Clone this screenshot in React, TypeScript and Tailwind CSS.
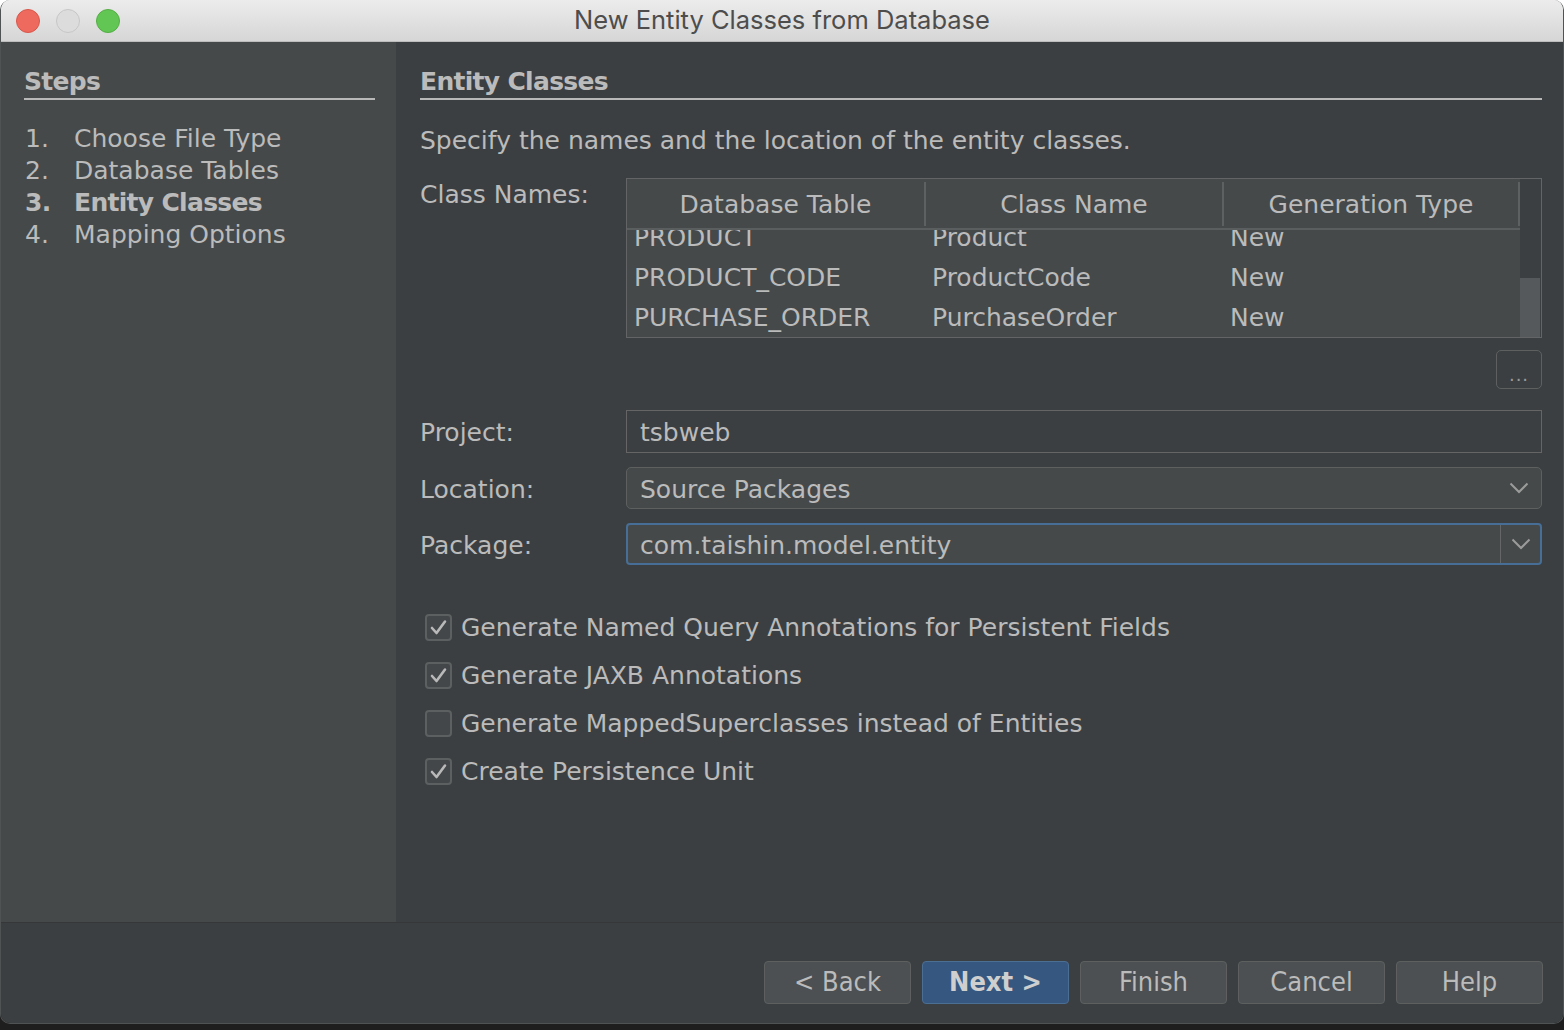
const steps = [
  { n: "1.", label: "Choose File Type" },
  { n: "2.", label: "Database Tables" },
  { n: "3.", label: "Entity Classes", current: true },
  { n: "4.", label: "Mapping Options" },
];

const rows = [
  ["PRODUCT", "Product", "New"],
  ["PRODUCT_CODE", "ProductCode", "New"],
  ["PURCHASE_ORDER", "PurchaseOrder", "New"],
];

const options = [
  { label: "Generate Named Query Annotations for Persistent Fields", checked: true },
  { label: "Generate JAXB Annotations", checked: true },
  { label: "Generate MappedSuperclasses instead of Entities", checked: false },
  { label: "Create Persistence Unit", checked: true },
];

function Chevron() {
  return (
    <svg width="20" height="12" viewBox="0 0 20 12" className="shrink-0">
      <path d="M1.5 1.5 L10 10 L18.5 1.5" fill="none" stroke="#9b9b9b" strokeWidth="2" />
    </svg>
  );
}

function CheckBox({ checked }: { checked: boolean }) {
  return (
    <span className="flex h-[27px] w-[27px] shrink-0 items-center justify-center rounded-[4px] border-2 border-[#5d6061] bg-[#43474a]">
      {checked && (
        <svg width="19" height="19" viewBox="0 0 19 19">
          <path d="M3 10 L7.5 15 L16 3.5" fill="none" stroke="#b9b9b9" strokeWidth="2.6" strokeLinecap="round" strokeLinejoin="round" />
        </svg>
      )}
    </span>
  );
}

function FooterButton({ label, primary }: { label: string; primary?: boolean }) {
  return (
    <button
      type="button"
      className={
        primary
          ? "h-[43px] w-[147px] rounded-[4px] border border-[#4b6e93] bg-[#365880] font-['DejaVu_Sans_Condensed','Liberation_Sans_Narrow','DejaVu_Sans',sans-serif] text-[27px] font-bold text-[#cfcfcf]"
          : "h-[43px] w-[147px] rounded-[4px] border border-[#5e6060] bg-[#4c5052] font-['DejaVu_Sans_Condensed','Liberation_Sans_Narrow','DejaVu_Sans',sans-serif] text-[27px] text-[#bbbbbb]"
      }
    >
      {label}
    </button>
  );
}

export default function App() {
  return (
    <div className="flex h-[1030px] w-[1564px] flex-col bg-[linear-gradient(#ffffff_50%,#1e1e1e_50%)] font-['DejaVu_Sans',sans-serif] text-[25px] text-[#bbbbbb]">
      <div className="flex h-[1024px] flex-col overflow-hidden rounded-[10px] border-x border-b border-[#505354]">
        {/* title bar */}
        <div className="grid h-[42px] shrink-0 grid-cols-[1fr_auto_1fr] items-center border-b border-[#bdbdbd] bg-[linear-gradient(#ececec,#d6d6d6)] px-[15px]">
          <div className="flex gap-4">
            <span className="h-[24px] w-[24px] rounded-full border border-[#d8574b] bg-[#ee6a5f]" />
            <span className="h-[24px] w-[24px] rounded-full border border-[#c6c6c6] bg-[#dcdcdc]" />
            <span className="h-[24px] w-[24px] rounded-full border border-[#55ad45] bg-[#62c655]" />
          </div>
          <div className="font-['Inter',sans-serif] text-[25.5px] text-[#4d4d4d]">New Entity Classes from Database</div>
          <div />
        </div>

        <div className="flex flex-1">
          {/* steps */}
          <div className="w-[395px] bg-[#45494a] pl-[23px] pr-[21px] pt-6">
            <h2 className="border-b-2 border-[#b8b8b8] font-bold leading-[32px] tracking-[-0.7px]">Steps</h2>
            <ol className="mt-[23px]">
              {steps.map((s) => (
                <li
                  key={s.n}
                  className={s.current ? "flex font-bold leading-[32px] tracking-[-0.7px]" : "flex leading-[32px]"}
                >
                  <span className="w-[50px] pl-[1px]">{s.n}</span>
                  <span>{s.label}</span>
                </li>
              ))}
            </ol>
          </div>

          {/* content */}
          <div className="flex-1 bg-[#3c3f41] pl-6 pr-[21px] pt-6">
            <h2 className="border-b-2 border-[#b8b8b8] font-bold leading-[32px] tracking-[-0.7px]">Entity Classes</h2>
            <p className="mt-[25px] leading-[32px]">Specify the names and the location of the entity classes.</p>

            <div className="mt-[21px] flex">
              <div className="w-[206px] pt-[1px] leading-[32px]">Class Names:</div>
              <div className="flex-1">
                <div className="flex h-[160px] border border-[#626465]">
                  <div className="flex w-[893px] flex-col bg-[#45494a]">
                    <div className="flex h-[51px] items-center border-b-2 border-[#5a5e5f]">
                      <span className="w-[297px] pt-[2px] text-center">Database Table</span>
                      <span className="h-[44px] w-[2px] bg-[#5d6162]" />
                      <span className="w-[296px] pt-[2px] text-center">Class Name</span>
                      <span className="h-[44px] w-[2px] bg-[#5d6162]" />
                      <span className="flex-1 pt-[2px] text-center">Generation Type</span>
                      <span className="h-[44px] w-[2px] bg-[#5d6162]" />
                    </div>
                    <div className="h-[107px] overflow-hidden">
                      <div className="-mt-[12px]">
                        {rows.map((r) => (
                          <div key={r[0]} className="grid h-[40px] grid-cols-[298px_298px_1fr] items-center leading-[40px]">
                            <span className="pl-[7px]">{r[0]}</span>
                            <span className="pl-[7px]">{r[1]}</span>
                            <span className="pl-[7px]">{r[2]}</span>
                          </div>
                        ))}
                      </div>
                    </div>
                  </div>
                  <div className="flex w-[20px] flex-col justify-end bg-[#3c3f41]">
                    <div className="h-[59px] bg-[#56595b]" />
                  </div>
                </div>
                <div className="mt-3 flex justify-end">
                  <button
                    type="button"
                    className="flex h-[39px] w-[46px] items-end justify-center rounded-[5px] border border-[#5e6060] pb-[4px] text-[18px] leading-none tracking-[1px] text-[#9a9a9a]"
                  >
                    ...
                  </button>
                </div>
              </div>
            </div>

            <div className="mt-[21px] grid grid-cols-[206px_1fr] items-center gap-y-[14px]">
              <div className="pt-[3px]">Project:</div>
              <div className="flex h-[43px] items-center border border-[#656565] bg-[#3c3f41] pl-[13px] pt-[2px]">tsbweb</div>

              <div className="pt-[3px]">Location:</div>
              <div className="flex h-[42px] items-center justify-between rounded-[5px] border border-[#5e6060] bg-[#45494a] pl-[13px] pr-[12px]">
                <span className="pt-[3px]">Source Packages</span>
                <Chevron />
              </div>

              <div className="pt-[3px]">Package:</div>
              <div className="flex h-[42px] items-stretch rounded-[4px] border-2 border-[#476e96] bg-[#45494a]">
                <span className="flex flex-1 items-center pl-3 pt-[3px]">com.taishin.model.entity</span>
                <span className="w-px bg-[#646667]" />
                <span className="flex w-[39px] items-center justify-center">
                  <Chevron />
                </span>
              </div>
            </div>

            <div className="mt-[38px] pl-[5px]">
              {options.map((o) => (
                <div key={o.label} className="flex h-[48px] items-center gap-[9px]">
                  <CheckBox checked={o.checked} />
                  <span className="pt-[1px]">{o.label}</span>
                </div>
              ))}
            </div>
          </div>
        </div>

        {/* footer */}
        <div className="flex h-[101px] shrink-0 items-start justify-end gap-[11px] border-t border-[#353738] bg-[#3c3f41] pr-5 pt-[38px]">
          <FooterButton label="< Back" />
          <FooterButton label="Next >" primary />
          <FooterButton label="Finish" />
          <FooterButton label="Cancel" />
          <FooterButton label="Help" />
        </div>
      </div>
    </div>
  );
}
